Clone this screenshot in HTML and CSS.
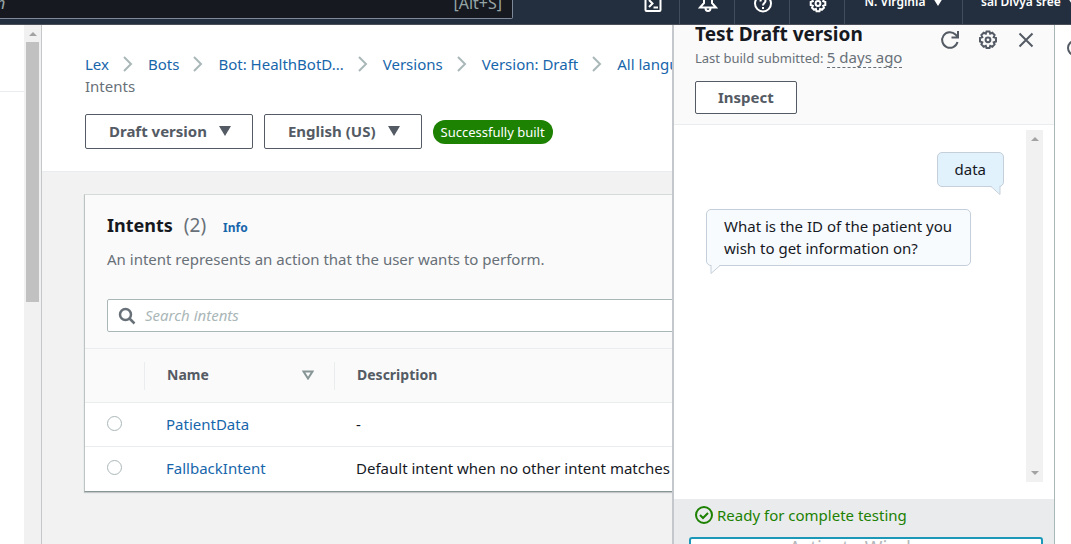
FILE: index.html
```html
<!DOCTYPE html>
<html lang="en">
<head>
<meta charset="utf-8">
<title>Intents - Lex</title>
<meta name="viewport" content="width=device-width, initial-scale=1">
<link rel="stylesheet" href="styles.css">
</head>
<body>
<header class="topbar">
  <div class="topsearch"><span class="topsearch-hint">n</span><kbd class="topsearch-key">[Alt+S]</kbd></div>
  <nav class="topnav" aria-label="Account">
    <button class="topnav-icon" aria-label="CloudShell"><svg width="20" height="20" viewBox="0 0 20 20"><rect x="2.500" y="2" width="15" height="15" rx="1"/><path d="M6 6l3.500 3.500L6 13M10.500 13.500H15"/></svg></button>
    <button class="topnav-icon" aria-label="Notifications"><svg width="20" height="20" viewBox="0 0 20 20"><path d="M10 1C7 1 6 3 6 6v3l-4 4.500h16L14 9V6c0-3-1-5-4-5zM7.500 14c0 4 5 4 5 0"/></svg></button>
    <button class="topnav-icon" aria-label="Help"><svg width="20" height="20" viewBox="0 0 20 20"><circle cx="10" cy="9.500" r="8"/><path d="M7.500 7.500c0-4 5-4 5-.5 0 2-2.500 2-2.500 4.500M10 13v2"/></svg></button>
    <button class="topnav-icon" aria-label="Settings"><svg width="20" height="20" viewBox="0 0 20 20"><path d="M8.500 2h3l.6 2 1.800-.8 2.100 2.100-.8 1.900 2.100.8v3l-2.100.8.8 1.900-2.100 2.100-1.800-.8-.6 2.200h-3l-.6-2.200-1.800.8L4 13.700l.8-1.900-2.100-.8V8l2.100-.8L4 5.300l2.100-2.100 1.800.8z"/><circle cx="10" cy="9.500" r="2.400"/></svg></button>
    <button class="topnav-text region">N. Virginia <svg class="caret" width="10" height="8" viewBox="0 0 10 8"><path d="M0 0h10L5 8z"/></svg></button>
    <button class="topnav-text account">sai Divya sree <svg class="caret" width="10" height="8" viewBox="0 0 10 8"><path d="M0 0h10L5 8z"/></svg></button>
  </nav>
</header>
<div class="workspace">
  <aside class="sidebar"><div class="sidebar-head"></div></aside>
  <div class="scrollbar side-scroll"><span class="arrow-up"></span><span class="thumb"></span></div>
  <main class="content">
    <section class="page-head">
      <nav aria-label="Breadcrumb">
        <ol class="crumbs">
          <li><a href="#">Lex</a><svg class="chev" width="10" height="16" viewBox="0 0 10 16"><path d="M1 1l7 7-7 7"/></svg></li>
          <li><a href="#">Bots</a><svg class="chev" width="10" height="16" viewBox="0 0 10 16"><path d="M1 1l7 7-7 7"/></svg></li>
          <li><a href="#">Bot: HealthBotD...</a><svg class="chev" width="10" height="16" viewBox="0 0 10 16"><path d="M1 1l7 7-7 7"/></svg></li>
          <li><a href="#">Versions</a><svg class="chev" width="10" height="16" viewBox="0 0 10 16"><path d="M1 1l7 7-7 7"/></svg></li>
          <li><a href="#">Version: Draft</a><svg class="chev" width="10" height="16" viewBox="0 0 10 16"><path d="M1 1l7 7-7 7"/></svg></li>
          <li><a href="#">All languages</a></li>
        </ol>
        <div class="crumb-current" aria-current="page">Intents</div>
      </nav>
      <div class="actions">
        <button class="btn">Draft version <svg class="caret" width="12" height="10" viewBox="0 0 12 10"><path d="M0 0h12L6 10z"/></svg></button>
        <button class="btn">English (US) <svg class="caret" width="12" height="10" viewBox="0 0 12 10"><path d="M0 0h12L6 10z"/></svg></button>
        <span class="badge">Successfully built</span>
      </div>
    </section>
    <section class="card">
      <div class="card-head">
        <div class="card-title"><h1>Intents</h1><span class="count">(2)</span><a class="info" href="#">Info</a></div>
        <p class="card-desc">An intent represents an action that the user wants to perform.</p>
        <div class="search">
          <svg width="18" height="18" viewBox="0 0 18 18"><circle cx="7.500" cy="7.500" r="5.500"/><path d="M11.500 11.500l5 5"/></svg>
          <input type="text" placeholder="Search intents" aria-label="Search intents">
        </div>
      </div>
      <table class="intents">
        <thead><tr><th class="pick"></th><th class="name"><div class="th">Name <svg width="12" height="10" viewBox="0 0 12 10"><path d="M1.500 1.500h9L6 8.500z"/></svg></div></th><th><div class="th">Description</div></th></tr></thead>
        <tbody>
          <tr><td class="pick"><input type="radio" name="intent" aria-label="Select PatientData"></td><td><a href="#">PatientData</a></td><td>-</td></tr>
          <tr><td class="pick"><input type="radio" name="intent" aria-label="Select FallbackIntent"></td><td><a href="#">FallbackIntent</a></td><td>Default intent when no other intent matches</td></tr>
        </tbody>
      </table>
    </section>
  </main>
  <aside class="panel">
    <div class="panel-head">
      <div class="panel-info">
        <h2>Test Draft version</h2>
        <p>Last build submitted: <span class="ago">5 days ago</span></p>
        <button class="btn inspect">Inspect</button>
      </div>
      <div class="panel-tools">
        <button aria-label="Refresh"><svg width="20" height="20" viewBox="0 0 20 20"><path d="M17.500 12A7.800 7.800 0 1 1 15.500 4.500L18 7M18 1v6.500h-6.500"/></svg></button>
        <button aria-label="Settings"><svg width="20" height="20" viewBox="0 0 20 20"><path d="M8.500 1.500h3l.7 2.200 2.100-.9 2.300 2.300-.9 2.100 2.300.8v3.500l-2.300.9.9 2-2.300 2.300-2.100-.9-.7 2.200h-3l-.7-2.200-2.100.9-2.300-2.300.9-2L2 11.500V8l2.300-.8-.9-2.100 2.300-2.300 2.100.9z"/><circle cx="10" cy="9.800" r="2.400"/></svg></button>
        <button aria-label="Close"><svg width="20" height="20" viewBox="0 0 20 20"><path d="M3.500 3.500l13 13M16.500 3.500l-13 13"/></svg></button>
      </div>
    </div>
    <div class="chat">
      <div class="messages">
        <div class="bubble user">data<svg class="tail" width="12" height="9" viewBox="0 0 12 9"><path class="fill" d="M1 0l9 8V0z"/><path d="M1 .5l9 8V0"/></svg></div>
        <div class="bubble bot">What is the ID of the patient you wish to get information on?<svg class="tail" width="12" height="9" viewBox="0 0 12 9"><path class="fill" d="M11 0L2 8V0z"/><path d="M11 .5l-9 8V0"/></svg></div>
      </div>
      <div class="scrollbar chat-scroll"><span class="arrow-up"></span><span class="arrow-down"></span></div>
    </div>
    <div class="panel-foot">
      <p class="ready"><svg width="18" height="18" viewBox="0 0 18 18"><circle cx="9" cy="9" r="8"/><path d="M5 9l3 3 5-5"/></svg>Ready for complete testing</p>
      <div class="composer"><input type="text" aria-label="Type a message"><span class="watermark">Activate Windows</span></div>
    </div>
  </aside>
  <aside class="rail"><svg width="16" height="16" viewBox="0 0 16 16"><circle cx="8" cy="8" r="7"/></svg></aside>
</div>
</body>
</html>
```

FILE: styles.css
```css
* { box-sizing: border-box; }
body {
  margin: 0;
  height: 100vh;
  display: flex;
  flex-direction: column;
  overflow: hidden;
  font: 15px/22px "Noto Sans", "Open Sans", sans-serif;
  color: #16191f;
  background: #fff;
}
button, input { font: inherit; color: inherit; }
button { cursor: pointer; }
a { color: #1766ab; text-decoration: none; }
h1, h2, p, ol { margin: 0; padding: 0; }
svg { fill: none; stroke: currentColor; flex: none; }
.caret { fill: currentColor; stroke: none; }

.topbar {
  height: 25px;
  flex: none;
  display: flex;
  align-items: flex-end;
  justify-content: space-between;
  overflow: hidden;
  background: #232f3e;
  border-bottom: 1px solid #4a4f5a;
}
.topsearch {
  width: 513px;
  height: 40px;
  margin-bottom: 5px;
  padding-bottom: 4px;
  padding-right: 10px;
  display: flex;
  align-items: flex-end;
  justify-content: space-between;
  background: #16191f;
  border: 1px solid #7d8998;
  border-left: 0;
  border-radius: 0 2px 2px 0;
  color: #95a5a6;
  font-size: 16px;
}
.topsearch-hint { font-style: italic; margin-left: -4px; }
.topsearch-key { font: inherit; }
.topnav { display: flex; align-items: flex-end; color: #fff; margin-right: -12px; }
.topnav button { background: none; border: 0; padding: 0; color: #fff; white-space: nowrap; }
.topnav-icon {
  width: 55px;
  height: 40px;
  display: flex;
  justify-content: center;
  align-items: flex-end;
}
.topnav .topnav-icon { border-right: 1px solid #414d5c; padding: 0 0 10px 2px; }
.topnav-icon svg { stroke-width: 2; }
.topnav .topnav-text { height: 40px; padding-bottom: 4px; font-size: 12px; font-weight: 600; }
.topnav .region { width: 118px; border-right: 1px solid #414d5c; }
.topnav .account { width: 120px; text-align: left; padding-left: 18px; }
.topnav .topnav-text .caret { margin-left: 4px; }

.workspace { flex: 1; min-height: 0; display: flex; }
.sidebar { width: 24px; flex: none; }
.sidebar-head { height: 67px; border-bottom: 1px solid #eaeded; }
.scrollbar { display: flex; flex-direction: column; align-items: center; background: #f1f1f1; flex: none; }
.side-scroll { width: 18px; border-right: 1px solid #c4c8c8; padding-top: 7px; }
.arrow-up { border: 4px solid transparent; border-top: 0; border-bottom: 4px solid #a3a3a3; }
.arrow-down { border: 4px solid transparent; border-bottom: 0; border-top: 4px solid #a3a3a3; }
.thumb { width: 13px; height: 260px; margin-top: 6px; background: #c1c1c1; }

.content { flex: 1; min-width: 0; overflow: hidden; background: #f2f2f2; white-space: nowrap; }
.page-head { background: #fff; padding: 28px 0 22px 43px; border-bottom: 1px solid #eaeded; }
.crumbs { display: flex; list-style: none; }
.crumbs li { display: flex; align-items: center; }
.chev { margin: 0 15px 0 14px; stroke: #aab7b8; stroke-width: 2; }
.crumb-current { color: #687078; }
.actions { display: flex; align-items: center; gap: 11px; margin-top: 17px; }
.btn {
  display: flex;
  align-items: center;
  gap: 12px;
  padding: 4px 21px 6px 23px;
  background: #fff;
  border: 1px solid #545b64;
  border-radius: 2px;
  color: #545b64;
  font-weight: 700;
}
.actions .btn { height: 35px; }
.badge { background: #1d8102; color: #fff; border-radius: 12px; padding: 1px 8px; font-size: 13px; }

.card {
  min-width: 760px;
  margin: 22px 0 0 42px;
  background: #fff;
  border: 1px solid #d5dbdb;
  border-left-color: #bcc3c3;
  border-bottom-color: #879596;
  box-shadow: 0 1px 1px #c4c8c8;
}
.card-head { background: #fafafa; padding: 18px 22px 16px; }
.card-title { display: flex; align-items: baseline; gap: 11px; height: 24px; }
.card-title h1 { font-size: 18px; line-height: 24px; }
.count { font-size: 19px; line-height: 24px; color: #687078; }
.info { font-size: 12px; font-weight: 700; margin-left: 6px; }
.card-desc { color: #687078; margin-top: 11px; }
.search {
  display: flex;
  align-items: center;
  gap: 9px;
  height: 33px;
  margin-top: 29px;
  padding: 0 10px;
  background: #fff;
  border: 1px solid #aab7b8;
  border-radius: 2px;
}
.search svg { color: #687078; stroke-width: 2.5; }
.search input { flex: 1; border: 0; outline: 0; padding: 0 0 2px; background: none; }
.search input::placeholder { color: #aab7b8; font-style: italic; opacity: 1; }
.intents { width: 100%; border-collapse: collapse; table-layout: fixed; }
.intents th { height: 54px; padding: 0; background: #fafafa; border-top: 1px solid #eaeded; text-align: left; color: #545b64; font-size: 14px; }
.intents td { height: 44px; padding: 0 22px 2px; border-top: 1px solid #eaeded; }
.intents .pick { width: 59px; }
.intents .name { width: 190px; }
.th { display: flex; align-items: center; justify-content: space-between; height: 28px; padding: 0 20px 2px 22px; border-left: 1px solid #eaeded; }
.th svg { color: #879596; stroke-width: 2; }
.intents input { appearance: none; display: block; width: 15px; height: 15px; margin: 0; border: 1px solid #aab7b8; border-radius: 50%; background: #fff; }

.panel { width: 383px; flex: none; display: flex; flex-direction: column; border-left: 2px solid #c4c8cc; border-right: 1px solid #aab7b8; background: #fff; }
.panel-head { display: flex; justify-content: space-between; padding: 0 18px 10px 21px; background: #fafafa; border-bottom: 1px solid #eaeded; }
.panel h2 { font-size: 19px; line-height: 18px; }
.panel-head p { color: #687078; font-size: 13px; line-height: 20px; margin-top: 4px; }
.ago { display: inline-block; font-size: 15px; line-height: 20px; border-bottom: 1px dashed #687078; }
.inspect { margin-top: 13px; height: 33px; padding: 3px 22px 5px; }
.panel-tools { display: flex; align-items: flex-start; gap: 18px; padding-top: 5px; }
.panel-tools button { display: flex; padding: 0; border: 0; background: none; color: #545b64; stroke-width: 2; }
.chat { flex: 1; min-height: 0; display: flex; padding: 5px 11px 17px 32px; }
.messages { flex: 1; display: flex; flex-direction: column; gap: 22px; padding: 22px 22px 0 0; }
.bubble { position: relative; padding: 5px 17px 6px; border: 1px solid #c5cfda; border-radius: 5px; }
.user { align-self: flex-end; background: #e1f2fd; }
.bot { align-self: flex-start; width: 265px; padding-right: 12px; background: #f8fbfe; }
.tail { position: absolute; top: 100%; stroke: #c5cfda; }
.tail .fill { stroke: none; }
.user .tail { right: 1px; }
.user .fill { fill: #e1f2fd; }
.bot .tail { left: 2px; }
.bot .fill { fill: #f8fbfe; }
.chat-scroll { width: 17px; justify-content: space-between; padding: 7px 0; }
.panel-foot { height: 45px; flex: none; padding: 5px 11px 0 15px; background: #e9ebed; overflow: hidden; }
.ready { display: flex; align-items: center; gap: 4px; padding-left: 6px; color: #1d8102; }
.ready svg { stroke-width: 2; }
.composer { position: relative; margin-top: 11px; }
.composer input { width: 100%; height: 34px; border: 2px solid #1b98b8; border-radius: 3px; background: #fff; }
.watermark { position: absolute; left: 100px; top: 0; font-size: 19px; line-height: 22px; color: #b4b8bc; pointer-events: none; }
.rail { width: 16px; flex: none; overflow: hidden; padding: 14px 0 0 12px; color: #545b64; }
.rail svg { stroke-width: 2; }
```
